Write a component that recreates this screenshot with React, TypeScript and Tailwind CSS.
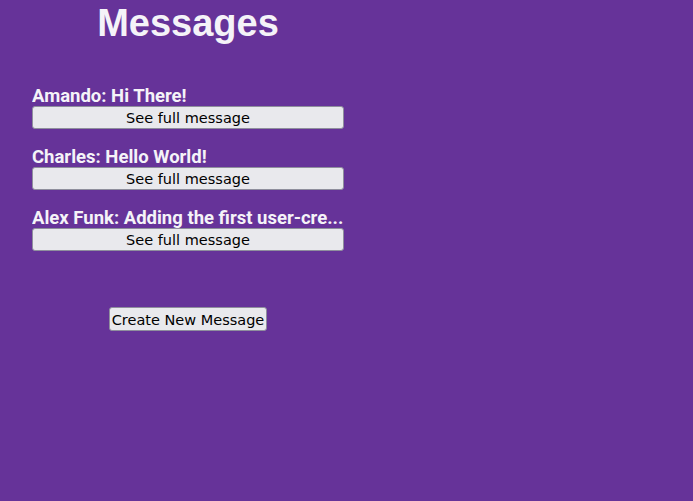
export default function App() {
  const items = [
    "Amando: Hi There!",
    "Charles: Hello World!",
    "Alex Funk: Adding the first user-cre...",
  ];
  return (
    <div className="min-h-screen w-full bg-[#663399]">
      <div className="w-[312px] ml-[32px] flex flex-col">
        <h1 className="text-center text-[38px] leading-[46px] font-bold text-[#f5f3f8] [font-family:'Liberation_Sans',sans-serif]">
          Messages
        </h1>
        <div className="mt-[39px] flex flex-col gap-[17px]">
          {items.map((t) => (
            <div key={t} className="flex flex-col">
              <div className="h-[21px] leading-[22px] text-[18.5px] font-bold text-[#f5f3f8] whitespace-nowrap overflow-hidden [font-family:Roboto,sans-serif]">
                {t}
              </div>
              <button className="h-[23px] w-full rounded-[3px] border border-[#8f8f9d] bg-[#e9e9ed] pt-[2px] text-[14.5px] text-black [font-family:'DejaVu_Sans',sans-serif] leading-none">
                See full message
              </button>
            </div>
          ))}
        </div>
        <div className="mt-[56px] flex justify-center">
          <button className="h-[24px] w-[158px] rounded-[3px] border border-[#8f8f9d] bg-[#e9e9ed] pt-[2px] text-[14.5px] text-black [font-family:'DejaVu_Sans',sans-serif] leading-none whitespace-nowrap">
            Create New Message
          </button>
        </div>
      </div>
    </div>
  );
}
